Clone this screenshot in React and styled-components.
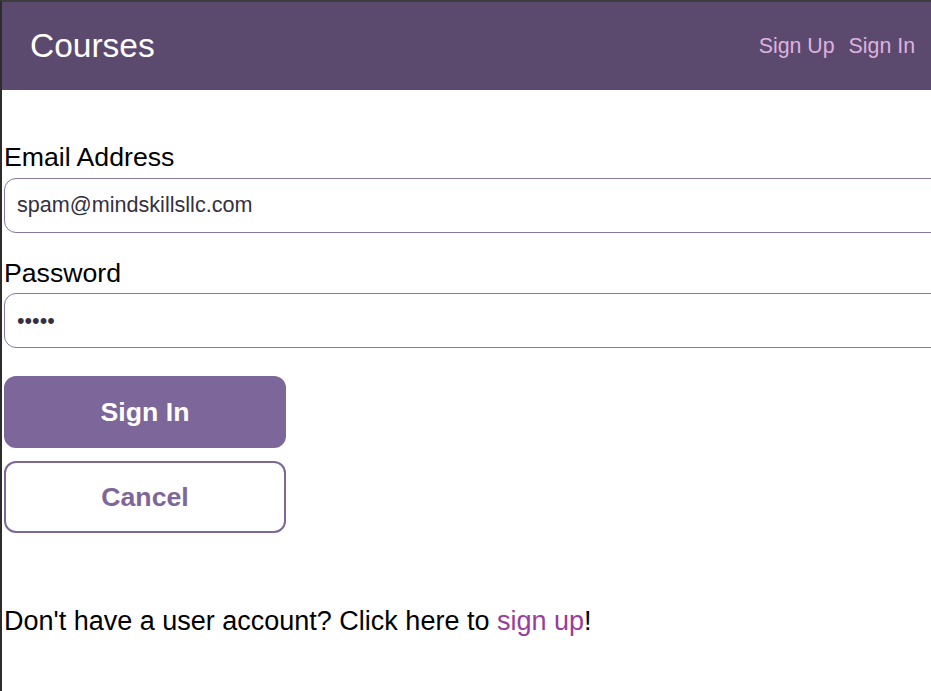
import React from "react";
import styled, { createGlobalStyle } from "styled-components";

const GlobalStyle = createGlobalStyle`
  html, body {
    margin: 0;
    padding: 0;
    background: #ffffff;
    overflow: hidden;
  }
  body {
    font-family: "Liberation Sans", Arial, sans-serif;
    color: #000;
  }
`;

const Frame = styled.div`
  box-sizing: border-box;
  min-height: 100vh;
  border-top: 2px solid #3d3d3d;
  border-left: 2px solid #2c2c2c;
`;

const Header = styled.header`
  box-sizing: border-box;
  height: 88px;
  background: #5b4a6e;
  display: flex;
  align-items: center;
  justify-content: space-between;
  padding: 0 16px 0 28px;
`;

const Title = styled.h1`
  margin: 0;
  font-size: 33.5px;
  font-weight: normal;
  line-height: 1.15;
  color: #ffffff;
`;

const Nav = styled.nav`
  display: flex;
  gap: 14px;
`;

const NavLink = styled.a`
  color: #dfb1e0;
  font-size: 21.33px;
  line-height: 1.15;
  text-decoration: none;
`;

const Main = styled.main`
  padding: 52px 0 0 2px;
`;

const Form = styled.form`
  display: flex;
  flex-direction: column;
  align-items: flex-start;
`;

const Label = styled.label`
  display: block;
  font-size: 26.67px;
  line-height: 1.15;
`;

const Input = styled.input`
  display: block;
  box-sizing: content-box;
  width: 100%;
  height: 53px;
  margin: 5px 0 ${(p) => p.$after}px;
  padding: 0 12px;
  border: 1px solid #8a78a0;
  border-radius: 12px;
  background: #ffffff;
  font-family: "Liberation Sans", Arial, sans-serif;
  font-size: 21.6px;
  color: #35303f;
  outline: none;
`;

const Actions = styled.div`
  display: flex;
  flex-direction: column;
  gap: 13px;
  margin-top: 28px;
`;

const Button = styled.button`
  box-sizing: border-box;
  width: 282px;
  height: 72px;
  border-radius: 12px;
  border: 2px solid #7d6699;
  background: ${(p) => (p.$primary ? "#7d6699" : "#ffffff")};
  color: ${(p) => (p.$primary ? "#ffffff" : "#7d6699")};
  font-family: "Liberation Sans", Arial, sans-serif;
  font-size: 26.67px;
  font-weight: bold;
  cursor: pointer;
`;

const Footer = styled.p`
  margin: 73px 0 0;
  font-size: 27px;
  line-height: 1.15;
`;

const TextLink = styled.a`
  color: #993d9b;
  text-decoration: none;
`;

export default function App() {
  return (
    <>
      <GlobalStyle />
      <Frame>
        <Header>
          <Title>Courses</Title>
          <Nav>
            <NavLink href="#">Sign Up</NavLink>
            <NavLink href="#">Sign In</NavLink>
          </Nav>
        </Header>
        <Main>
          <Form onSubmit={(e) => e.preventDefault()}>
            <Label htmlFor="email">Email Address</Label>
            <Input
              id="email"
              type="text"
              defaultValue="spam@mindskillsllc.com"
              $after={25}
            />
            <Label htmlFor="password">Password</Label>
            <Input id="password" type="password" defaultValue="12345" $after={0} />
            <Actions>
              <Button type="submit" $primary>
                Sign In
              </Button>
              <Button type="button">Cancel</Button>
            </Actions>
          </Form>
          <Footer>
            Don't have a user account? Click here to{" "}
            <TextLink href="#">sign up</TextLink>!
          </Footer>
        </Main>
      </Frame>
    </>
  );
}
